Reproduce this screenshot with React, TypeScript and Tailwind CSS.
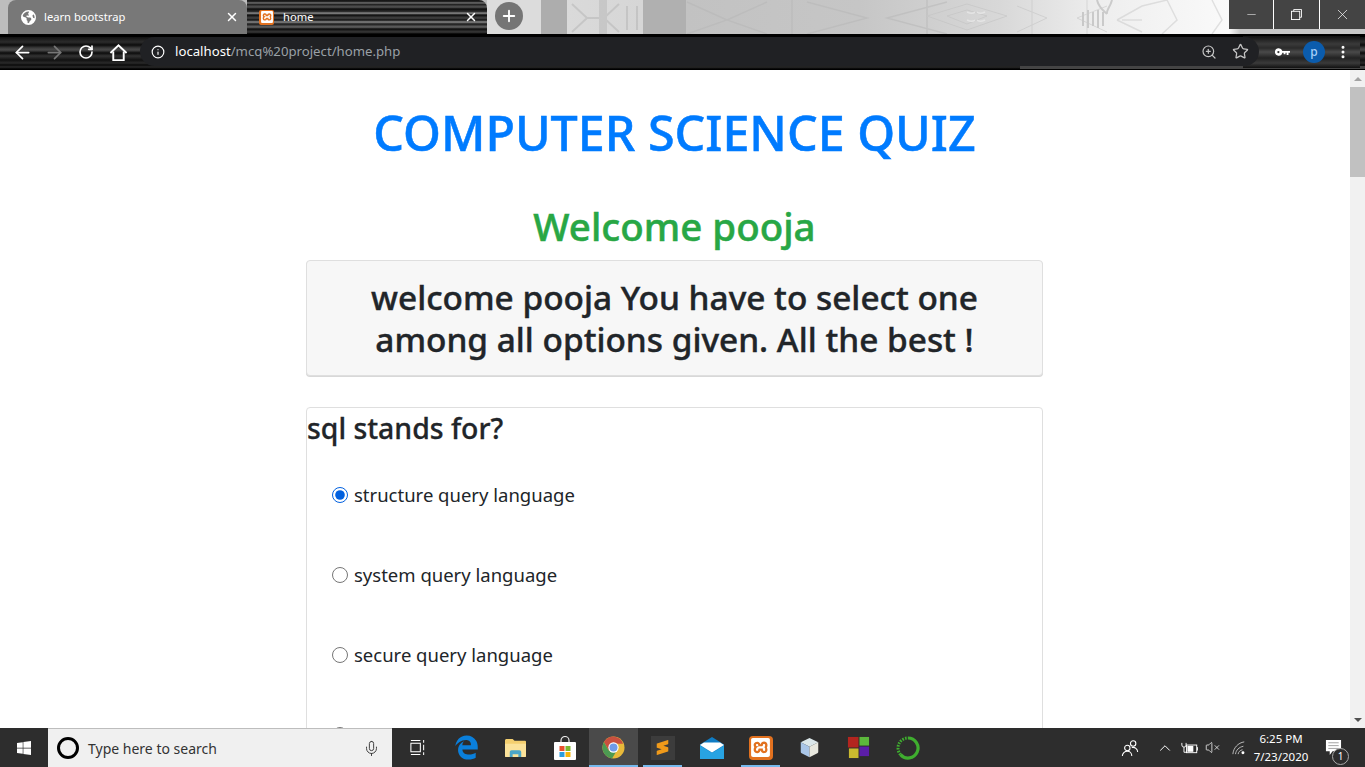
import { ArrowLeft, ArrowRight, RotateCw, Info, ZoomIn, Star, MoreVertical, Plus, X, Minus, Mic, ChevronUp, VolumeX } from 'lucide-react';
import { FaWindows, FaEdgeLegacy, FaEarthAmericas } from 'react-icons/fa6';
import { SiSublimetext, SiXampp } from 'react-icons/si';

const options = ['structure query language', 'system query language', 'secure query language', 'none of these'];

function ChromeIcon() {
  return (
    <svg viewBox="0 0 24 24" className="w-[23px] h-[23px]">
      <circle cx="12" cy="12" r="11.5" fill="#e8b93a" />
      <path d="M12 .5A11.5 11.5 0 0 0 2 6.3L7 15l5-7h10a11.5 11.5 0 0 0-10-7.5z" fill="#c9503f" />
      <path d="M2 6.300A11.500 11.500 0 0 0 10.500 23.400L15 16l-8-1z" fill="#4c9a52" />
      <circle cx="12" cy="12" r="5.400" fill="#fff" />
      <circle cx="12" cy="12" r="4.200" fill="#6f9be8" />
    </svg>
  );
}

function FolderIcon() {
  return (
    <svg viewBox="0 0 24 22" className="w-[23px] h-[21px]">
      <path d="M1 3.500C1 2.700 1.700 2 2.500 2H9l2 2h11c.6 0 1 .4 1 1v15c0 .6-.4 1-1 1H2c-.6 0-1-.4-1-1z" fill="#f4cf6f" />
      <path d="M1 7h22v13c0 .6-.4 1-1 1H2c-.6 0-1-.4-1-1z" fill="#fbe29a" />
      <path d="M6 21v-5c0-1 .8-2 2-2h8c1.200 0 2 1 2 2v5h-3v-3H9v3z" fill="#4ba6c8" />
    </svg>
  );
}

function StoreIcon() {
  return (
    <svg viewBox="0 0 24 24" className="w-[24px] h-[24px]">
      <path d="M8 7V4.500a4 4 0 0 1 8 0V7" fill="none" stroke="#e8e8e8" strokeWidth="1.200" />
      <rect x="1" y="6" width="22" height="18" rx="1" fill="#fff" />
      <rect x="6.500" y="10" width="5" height="5" fill="#e8502e" />
      <rect x="12.500" y="10" width="5" height="5" fill="#7cb82f" />
      <rect x="6.500" y="16" width="5" height="5" fill="#2a9de0" />
      <rect x="12.500" y="16" width="5" height="5" fill="#f5b50c" />
    </svg>
  );
}

function MailIcon() {
  return (
    <svg viewBox="0 0 24 22" className="w-[24px] h-[22px]">
      <path d="M0 7.500 12 0l12 7.500V22H0z" fill="#0f7cc4" />
      <path d="M0 8.500 12 16l12-7.500V22H0z" fill="#28a3e2" />
      <path d="M0 8 4 5.500h16L24 8l-12 7.500z" fill="#fff" />
    </svg>
  );
}

function CubeIcon() {
  return (
    <svg viewBox="0 0 24 24" className="w-[21px] h-[23px]">
      <path d="M12 1 22 6 12 11 2 6z" fill="#dbe7ea" />
      <path d="M2 6l10 5v12L3 18.500C2.400 18.200 2 17.500 2 17z" fill="#a9c6e8" />
      <path d="M22 6 12 11v12l9-4.500c.6-.3 1-1 1-1.500z" fill="#e8e8df" />
    </svg>
  );
}

function BlocksIcon() {
  return (
    <svg viewBox="0 0 24 24" className="w-[23px] h-[23px]">
      <rect x="1" y="1" width="11" height="11" fill="#b3251f" />
      <rect x="13" y="1" width="10" height="9" fill="#5cb83c" />
      <rect x="2" y="13" width="10" height="10" fill="#c9b92f" />
      <rect x="13" y="11" width="10" height="10" fill="#5b1ea8" />
    </svg>
  );
}

function RingIcon() {
  return (
    <svg viewBox="0 0 24 24" className="w-[24px] h-[24px]" fill="none">
      <path d="M12 2a10 10 0 1 1-7.500 16.600" stroke="#3fae2f" strokeWidth="3.200" />
      <path d="M4.500 18.600A10 10 0 0 1 12 2" stroke="#3fae2f" strokeWidth="3" strokeDasharray="1.600 1.200" />
    </svg>
  );
}

function TaskViewIcon() {
  return (
    <svg viewBox="0 0 18 18" className="w-[17px] h-[17px]" fill="none" stroke="#fff" strokeWidth="1.100">
      <rect x="2" y="4.500" width="10" height="9" />
      <path d="M2 1.500h10M2 16.500h10M15.500 1v3M15.500 6v6M15.500 14v3" />
    </svg>
  );
}

function PeopleIcon() {
  return (
    <svg viewBox="0 0 20 20" className="w-[18px] h-[18px]" fill="none" stroke="#fff" strokeWidth="1.200">
      <circle cx="7" cy="10" r="3" />
      <circle cx="13.500" cy="5" r="3" />
      <path d="M1.500 19c0-3 2.500-5.500 5.500-5.500S12 16 12 19M12 9.500c3.500-.8 6.500 1.500 6.500 5" />
    </svg>
  );
}

function BatteryIcon() {
  return (
    <svg viewBox="0 0 20 14" className="w-[17px] h-[12px]" fill="none" stroke="#fff" strokeWidth="1.100">
      <rect x="6.500" y="3.500" width="12" height="9" />
      <rect x="7.500" y="4.500" width="7" height="7" fill="#fff" stroke="none" />
      <path d="M19.500 6v4" />
      <path d="M1 1v2.500a2.500 2.500 0 0 0 5 0V1M3.500 6v6h3" />
    </svg>
  );
}

function WifiIcon() {
  return (
    <svg viewBox="0 0 16 16" className="w-[14px] h-[14px]" fill="none" stroke="#bdbdbd" strokeWidth="1.100">
      <path d="M1 15C1.500 8 7 2 14 1M4 15c.5-4.500 4-8 9-9M7 15c.3-2.500 2.300-4.500 5-5" />
      <circle cx="12.500" cy="13.500" r="1.700" fill="#fff" stroke="none" />
    </svg>
  );
}

function HomeOutline() {
  return (
    <svg viewBox="0 0 20 20" className="w-[19px] h-[19px]" fill="none" stroke="#fff" strokeWidth="2">
      <path d="M1.500 10.500 10 2.500l8.500 8" />
      <path d="M4.500 9v9h11V9" />
    </svg>
  );
}

function KeyIcon() {
  return (
    <svg viewBox="0 0 20 10" className="w-[15px] h-[8px]" fill="#fff">
      <path d="M5 0a5 5 0 0 1 4.800 3.500H20V6h-2v3h-2.500V6H14v2h-2.500V6H9.800A5 5 0 1 1 5 0z" />
      <circle cx="4.500" cy="5" r="1.500" fill="#333" />
    </svg>
  );
}

// faint mirrored lines of the browser theme picture, from x=487 to x=1229
function ThemeTexture() {
  return (
    <svg viewBox="0 0 742 34" className="absolute left-[487px] top-0 w-[742px] h-[34px] opacity-50 blur-[0.6px]" fill="none">
      <g stroke="#b4b4b4" strokeWidth="2">
        <path d="M85 4 100 18 85 32M132 4 117 18 132 32M100 18h17" />
        <path d="M140 6v24M150 6v24" />
      </g>
      <rect x="112" y="0" width="8" height="34" fill="#b8b8b8" />
      <g stroke="#b6b6b6" strokeWidth="1.500">
        <path d="M200 2 240 20 200 34M280 2 240 20 280 34" />
        <path d="M320 2 380 18 320 34M460 2 400 18 460 34" />
        <path d="M305 0v34M440 0v34" />
      </g>
      <g stroke="#bfbfbf" strokeWidth="1">
        <path d="M440 16 480 4 520 16 480 30zM460 16 480 10 500 16 480 24z" />
        <path d="M530 6 560 18 530 32M620 6 590 18 620 32M545 0v34M600 0v34" />
      </g>
      <g stroke="#f4f4f4" strokeWidth="1.500">
        <path d="M480 12c4 2 6 2 8 0M480 20c4 2 6 2 8 0M498 12c-4 2-6 2-8 0M498 20c-4 2-6 2-8 0" />
      </g>
      <g stroke="#a8a8a8" strokeWidth="2">
        <path d="M596 12v14M601 10v18M606 12v14M611 10v18M616 12v14" />
        <path d="M610 0c2 8 6 10 10 14M625 0c-2 8-6 10-5 14" />
      </g>
      <g stroke="#c8c8c8" strokeWidth="1.500">
        <path d="M630 20 655 6 680 0M630 20 655 32M680 0 690 20 675 34M725 0 735 20 725 34" />
        <path d="M635 20h20" />
      </g>
    </svg>
  );
}

function ToolbarButton({ children }: { children: React.ReactNode }) {
  return <div className="w-8 h-8 flex items-center justify-center shrink-0">{children}</div>;
}

function Taskbar() {
  const apps = [
    { icon: <TaskViewIcon /> },
    { icon: <FaEdgeLegacy className="text-[25px] text-[#0a7fdb]" /> },
    { icon: <FolderIcon /> },
    { icon: <StoreIcon /> },
    { icon: <ChromeIcon />, active: true },
    { icon: <div className="w-6 h-6 bg-[#3c3c3c] flex items-center justify-center"><SiSublimetext className="text-[15px] text-[#f09a1a]" /></div>, open: true },
    { icon: <MailIcon /> },
    { icon: <div className="w-6 h-6 rounded-sm bg-[#e2711f] flex items-center justify-center"><SiXampp className="text-[19px] text-white" /></div>, open: true },
    { icon: <CubeIcon /> },
    { icon: <BlocksIcon /> },
    { icon: <RingIcon /> },
  ];

  return (
    <div className="h-[39px] shrink-0 flex bg-[#2d2d2d] text-white relative">
      <div className="w-12 flex items-center justify-center">
        <FaWindows className="text-[16px]" />
      </div>
      <div className="w-[344px] bg-[#f0f0f0] flex items-center pl-[9px] pr-[12px] text-[#333] border-t border-[#bdbdbd]">
        <div className="w-[22px] h-[22px] rounded-full border-[3px] border-black shrink-0" />
        <span className="ml-[9px] text-[14px]">Type here to search</span>
        <Mic size={17} strokeWidth={1.3} className="ml-auto" />
      </div>
      <div className="flex ml-px">
        {apps.map((app, i) => (
          <div key={i} className={`w-[49px] flex items-center justify-center relative ${app.active ? 'bg-[#4a4a4a]' : ''}`}>
            {app.icon}
            {app.active && <div className="absolute bottom-0 inset-x-0 h-[2px] bg-[#76b9ed]" />}
            {app.open && <div className="absolute bottom-0 inset-x-[5px] h-[2px] bg-[#76b9ed]" />}
          </div>
        ))}
      </div>
      <div className="ml-auto flex items-center pr-[10px]">
        <div className="w-[35px] flex justify-center -ml-1"><PeopleIcon /></div>
        <div className="w-[24px] ml-[6px] flex justify-center"><ChevronUp size={18} strokeWidth={1.3} /></div>
        <div className="w-[24px] flex justify-center"><BatteryIcon /></div>
        <div className="w-[23px] flex justify-center"><VolumeX size={15} strokeWidth={1.2} /></div>
        <div className="w-[24px] ml-[3px] flex justify-center"><WifiIcon /></div>
        <div className="w-[60px] text-center text-[11.500px] leading-[18px]">
          <div>6:25 PM</div>
          <div>7/23/2020</div>
        </div>
        <div className="w-[44px] flex justify-center relative">
          <svg viewBox="0 0 18 18" className="w-[17px] h-[17px]">
            <path d="M1 1h16v12H8l-3 4v-4H1z" fill="#fff" />
            <path d="M3.500 4h11M3.500 7h11M3.500 10h11" stroke="#888" strokeWidth=".8" />
          </svg>
          <div className="absolute left-[21px] top-[9px] w-[17px] h-[17px] rounded-full bg-[#2d2d2d] border border-[#aaa] flex items-center justify-center text-[10px]">1</div>
        </div>
      </div>
    </div>
  );
}

export default function App() {
  return (
    <div className="w-[1365px] h-[767px] flex flex-col overflow-hidden bg-white font-['Noto_Sans',sans-serif]">
      {/* tab strip */}
      <div className="h-[34px] shrink-0 flex relative bg-[linear-gradient(90deg,#bdbdbd_0,#bdbdbd_487px,#dcdcdc_487px,#dcdcdc_541px,#adadad_541px,#adadad_567px,#dadada_567px,#d6d6d6_643px,#b0b0b0_643px,#b0b0b0_686px,#c2c2c2_686px,#c6c6c6_860px,#d8d8d8_1000px,#eeeeee_1100px,#fafafa_1229px,#c8c8c8_1240px)]">
        <ThemeTexture />
        <div className="w-[239px] ml-2 rounded-t-lg bg-[#787878] flex items-center pl-[13px] pr-[8px] text-white text-[11.200px] relative">
          <FaEarthAmericas className="text-[15px]" />
          <span className="ml-[8px]">learn bootstrap</span>
          <X size={14} strokeWidth={2.500} className="ml-auto" />
        </div>
        <div className="w-[240px] rounded-tr-lg flex items-center pl-[12px] pr-[9px] text-white text-[11.200px] relative bg-[linear-gradient(180deg,#111_0,#2a2a2a_2px,#8a8a8a_3px,#1a1a1a_4px,#555_7px,#0c0c0c_9px,#333_12px,#999_13px,#0c0c0c_15px,#444_18px,#111_20px,#8c8c8c_22px,#1a1a1a_24px,#666_27px,#0c0c0c_29px,#3a3a3a_32px,#000_34px)]">
          <div className="w-[15px] h-[15px] rounded-[2px] bg-[#e2711f] flex items-center justify-center">
            <SiXampp className="text-[12px] text-white" />
          </div>
          <span className="ml-[9px]">home</span>
          <X size={14} strokeWidth={2.500} className="ml-auto" />
        </div>
        <div className="ml-2 mt-[2px] w-[28px] h-[28px] rounded-full bg-[#757575] flex items-center justify-center text-white relative">
          <Plus size={18} strokeWidth={2.500} />
        </div>
        {/* window controls */}
        <div className="absolute right-0 top-0 h-[29px] flex text-white bg-[#444]">
          <div className="w-[45px] flex items-center justify-center border-r border-white"><Minus size={13} strokeWidth={1} /></div>
          <div className="w-[46px] flex items-center justify-center border-r border-white">
            <svg viewBox="0 0 12 12" className="w-[11px] h-[11px]" fill="none" stroke="#fff" strokeWidth="1">
              <rect x=".5" y="2.500" width="9" height="9" />
              <path d="M3 2.500V.5h8.500V9H9.500" />
            </svg>
          </div>
          <div className="w-[45px] flex items-center justify-center"><X size={17} strokeWidth={1} /></div>
        </div>
      </div>

      {/* toolbar */}
      <div className="h-[36px] shrink-0 flex items-start pl-[6px] pr-[5px] pt-[2px] text-white relative bg-[linear-gradient(180deg,#000_0,#000_3px,#111_3px,#2c2c2c_8px,#0c0c0c_11px,#3c3c3c_14px,#4a4a4a_16px,#0c0c0c_19px,#333_22px,#111_26px,#2a2a2a_29px,#0a0a0a_31px,#2a2a2a_33px,#000_35px)]">
        <div className="absolute left-[1020px] right-0 bottom-px h-[3px] bg-[#444]" />
        <ToolbarButton><ArrowLeft size={21} strokeWidth={2} /></ToolbarButton>
        <ToolbarButton><ArrowRight size={21} strokeWidth={2} className="text-[#777]" /></ToolbarButton>
        <ToolbarButton><RotateCw size={16} strokeWidth={2.500} /></ToolbarButton>
        <ToolbarButton><HomeOutline /></ToolbarButton>
        <div className="ml-[6px] mt-[1px] w-[1119px] h-[29px] rounded-full bg-[#202124] flex items-center pl-[11px] pr-[9px] text-[13.200px] relative z-10">
          <Info size={14} strokeWidth={2} />
          <span className="ml-[10px]">localhost<span className="text-[#9aa0a6]">/mcq%20project/home.php</span></span>
          <ZoomIn size={16} strokeWidth={1.800} className="ml-auto text-[#c4c4c4]" />
          <Star size={17} strokeWidth={1.800} className="ml-[15px] text-[#c4c4c4] mr-[1px]" />
        </div>
        <div className="h-[32px] flex-1 -ml-[16px] pl-[16px] flex relative bg-[linear-gradient(180deg,#111_0,#3a3a3a_8px,#2a2a2a_12px,#4a4a4a_16px,#222_22px,#3a3a3a_27px,#111_32px)]">
          <div className="ml-[15px] w-[16px] h-8 flex items-center justify-center"><KeyIcon /></div>
          <div className="ml-[13px] mt-[5px] w-[22px] h-[22px] rounded-full bg-[#0b5cad] flex items-center justify-center text-[12px] font-medium text-[#a8d0fa]">p</div>
          <div className="ml-[10px] w-[16px] h-8 flex items-center justify-center"><MoreVertical size={16} strokeWidth={2.500} /></div>
        </div>
      </div>

      {/* page */}
      <div className="flex-1 min-h-0 flex overflow-hidden">
        <div className="flex-1 min-w-0 overflow-hidden text-[#212529]">
          <div className="w-[737px] ml-[306px]">
            <h1 className="mt-[33px] text-center text-[48.400px] leading-[58px] font-medium [-webkit-text-stroke:0.5px] text-[#007bff] whitespace-nowrap">COMPUTER SCIENCE QUIZ</h1>
            <h2 className="mt-[41px] text-center text-[38.500px] leading-[48px] font-medium [-webkit-text-stroke:0.5px] text-[#28a745]">Welcome pooja</h2>
            <div className="mt-[10px] h-[116px] bg-[#f7f7f7] border border-[#dfdfdf] rounded flex items-center justify-center shadow-[0_1px_0_#d8d8d8]">
              <p className="text-center text-[33.400px] leading-[42px] font-medium [-webkit-text-stroke:0.4px] px-4 -mt-px">welcome pooja You have to select one among all options given. All the best !</p>
            </div>
            <div className="mt-[31px] border border-[#dfdfdf] rounded h-[400px]">
              <h3 className="text-[28.400px] leading-[40px] font-medium [-webkit-text-stroke:0.3px]">sql stands for?</h3>
              <div className="mt-[7px] pl-[25px]">
                {options.map((opt, i) => (
                  <label key={opt} className="h-[80px] flex items-center text-[18.500px]">
                    <input type="radio" name="q1" defaultChecked={i === 0} className="w-4 h-4 accent-[#0060df]" />
                    <span className="ml-[6px]">{opt}</span>
                  </label>
                ))}
              </div>
            </div>
          </div>
        </div>
        {/* scrollbar */}
        <div className="w-[15px] shrink-0 bg-[#f1f1f1] flex flex-col items-center">
          <div className="h-[17px] flex items-center justify-center">
            <div className="border-x-[4px] border-x-transparent border-b-[4px] border-b-[#a3a3a3]" />
          </div>
          <div className="w-full h-[90px] bg-[#c1c1c1]" />
          <div className="mt-auto h-[17px] flex items-center justify-center">
            <div className="border-x-[4px] border-x-transparent border-t-[4px] border-t-[#505050]" />
          </div>
        </div>
      </div>

      <Taskbar />
    </div>
  );
}
